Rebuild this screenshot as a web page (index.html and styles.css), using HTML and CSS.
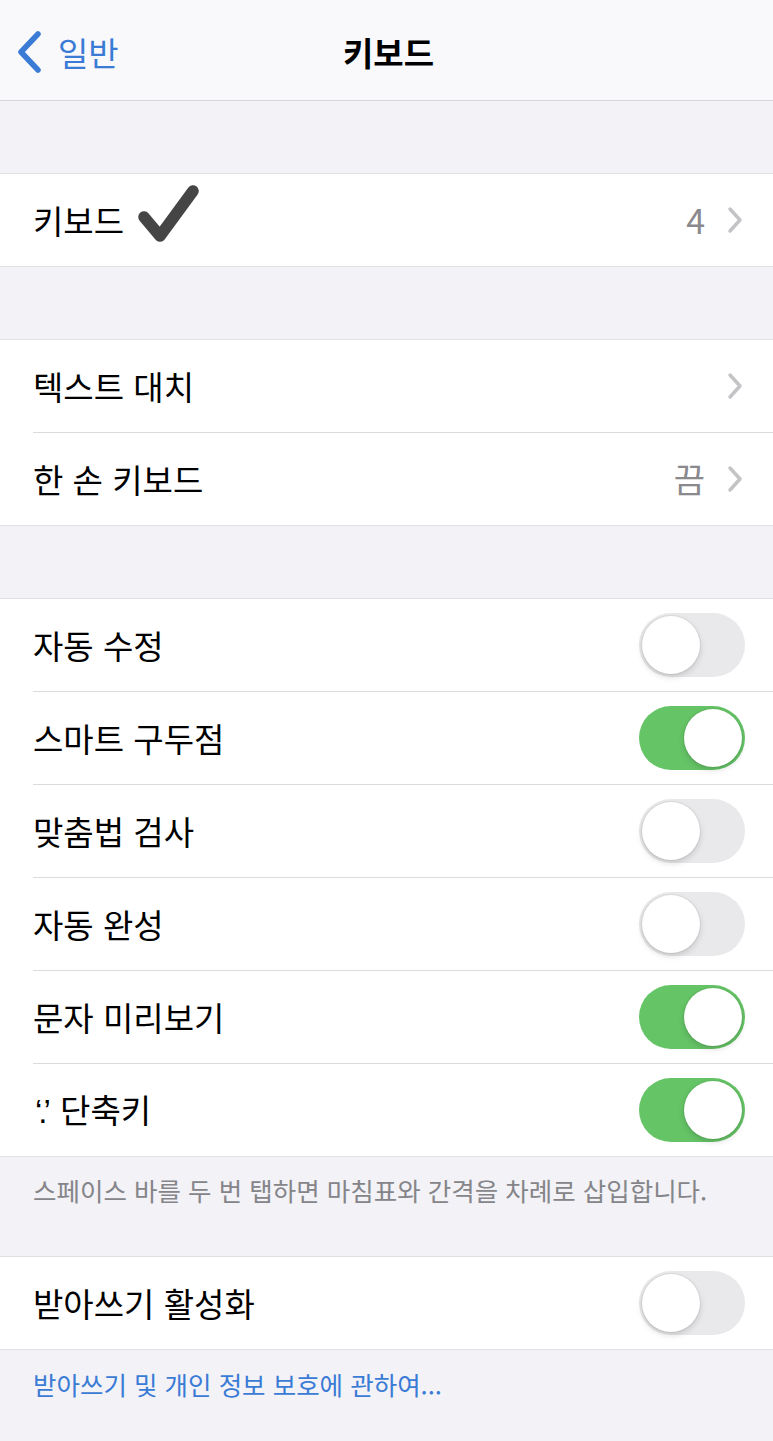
FILE: index.html
```html
<!DOCTYPE html>
<html lang="ko">
<head>
<meta charset="utf-8">
<link rel="stylesheet" href="styles.css">
</head>
<body>
<header class="nav">
  <div class="back">
    <svg class="back-chev" width="26" height="42" viewBox="0 0 26 42"><path d="M21 3 L4 21 L21 39" fill="none" stroke="#3a7bd5" stroke-width="5.5" stroke-linecap="round" stroke-linejoin="round"/></svg>
    <span class="back-label">일반</span>
  </div>
  <div class="nav-title">키보드</div>
</header>

<div class="gap"></div>
<section class="group">
  <div class="row last">
    <span class="label">키보드</span>
    <svg class="check" width="64" height="62" viewBox="0 0 64 62"><path d="M8 33 L24 52 L57 7" fill="none" stroke="#454545" stroke-width="11.5" stroke-linecap="round" stroke-linejoin="round"/></svg>
    <span class="spacer"></span>
    <span class="value">4</span>
    <svg class="chev" width="16" height="28" viewBox="0 0 16 28"><path d="M3 3 L13 14 L3 25" fill="none" stroke="#c4c4c7" stroke-width="3.5" stroke-linecap="round" stroke-linejoin="round"/></svg>
  </div>
</section>

<div class="gap"></div>
<section class="group">
  <div class="row">
    <span class="label">텍스트 대치</span>
    <span class="spacer"></span>
    <svg class="chev" width="16" height="28" viewBox="0 0 16 28"><path d="M3 3 L13 14 L3 25" fill="none" stroke="#c4c4c7" stroke-width="3.5" stroke-linecap="round" stroke-linejoin="round"/></svg>
  </div>
  <div class="row last">
    <span class="label">한 손 키보드</span>
    <span class="spacer"></span>
    <span class="value">끔</span>
    <svg class="chev" width="16" height="28" viewBox="0 0 16 28"><path d="M3 3 L13 14 L3 25" fill="none" stroke="#c4c4c7" stroke-width="3.5" stroke-linecap="round" stroke-linejoin="round"/></svg>
  </div>
</section>

<div class="gap"></div>
<section class="group">
  <div class="row">
    <span class="label">자동 수정</span>
    <span class="spacer"></span>
    <span class="toggle"><span class="knob"></span></span>
  </div>
  <div class="row">
    <span class="label">스마트 구두점</span>
    <span class="spacer"></span>
    <span class="toggle on"><span class="knob"></span></span>
  </div>
  <div class="row">
    <span class="label">맞춤법 검사</span>
    <span class="spacer"></span>
    <span class="toggle"><span class="knob"></span></span>
  </div>
  <div class="row">
    <span class="label">자동 완성</span>
    <span class="spacer"></span>
    <span class="toggle"><span class="knob"></span></span>
  </div>
  <div class="row">
    <span class="label">문자 미리보기</span>
    <span class="spacer"></span>
    <span class="toggle on"><span class="knob"></span></span>
  </div>
  <div class="row last">
    <span class="label"><span class="quote">‘.’</span> 단축키</span>
    <span class="spacer"></span>
    <span class="toggle on"><span class="knob"></span></span>
  </div>
</section>
<p class="footer">스페이스 바를 두 번 탭하면 마침표와 간격을 차례로 삽입합니다.</p>

<section class="group">
  <div class="row last">
    <span class="label">받아쓰기 활성화</span>
    <span class="spacer"></span>
    <span class="toggle"><span class="knob"></span></span>
  </div>
</section>
<p class="link">받아쓰기 및 개인 정보 보호에 관하여...</p>
</body>
</html>
```

FILE: styles.css
```css
* { box-sizing: border-box; }
html, body {
  margin: 0;
  padding: 0;
  background: #f2f2f7;
  font-family: "Noto Sans CJK KR", "Noto Sans", sans-serif;
  color: #000;
}
body { width: 773px; min-height: 1441px; }

.nav {
  height: 101px;
  background: #f9f9fb;
  border-bottom: 1px solid #d6d6d9;
  display: grid;
  grid-template-columns: 1fr auto 1fr;
  align-items: center;
  padding-top: 4px;
}
.back {
  display: flex;
  align-items: center;
  padding-left: 17px;
  grid-column: 1;
}
.back-chev { display: block; }
.back-label {
  color: #3a7bd5;
  font-size: 33px;
  margin-left: 15px;
  line-height: 1;
}
.nav-title {
  grid-column: 2;
  font-size: 33px;
  font-weight: 700;
  line-height: 1;
  padding-left: 4px;
}

.gap { height: 72px; }

.group {
  background: #fff;
  border-top: 1px solid #e0e0e4;
  border-bottom: 1px solid #e0e0e4;
}
.row {
  margin-left: 33px;
  height: 93px;
  border-bottom: 1px solid #dcdce0;
  display: flex;
  align-items: center;
  padding-right: 28px;
}
.row.last { border-bottom: none; height: 92px; }
.label {
  font-size: 33px;
  line-height: 1;
  letter-spacing: 0;
}
.quote {
  font-family: "Liberation Sans", "DejaVu Sans", sans-serif;
  letter-spacing: -4px;
  margin-right: 4px;
  margin-left: 2px;
}
.check { margin-left: 12px; margin-top: -10px; }
.spacer { flex: 1; }
.value {
  font-size: 34px;
  color: #8a8a8e;
  line-height: 1;
  margin-right: 22px;
}
.chev { margin-right: 2px; display: block; }

.toggle {
  width: 106px;
  height: 64px;
  border-radius: 32px;
  background: #e9e9eb;
  position: relative;
  display: block;
}
.toggle.on { background: #65c466; }
.knob {
  position: absolute;
  top: 3px;
  left: 3px;
  width: 58px;
  height: 58px;
  border-radius: 50%;
  background: #fff;
  box-shadow: 0 3px 6px rgba(0,0,0,0.15), 0 0 0 1px rgba(0,0,0,0.05);
}
.toggle.on .knob { left: 45px; }

.footer {
  margin: 0;
  height: 99px;
  padding: 16px 0 0 33px;
  font-size: 25.5px;
  line-height: 34px;
  color: #858589;
}
.link {
  margin: 0;
  padding: 14px 0 0 33px;
  font-size: 25.5px;
  line-height: 40px;
  color: #3a7bd5;
}
```
